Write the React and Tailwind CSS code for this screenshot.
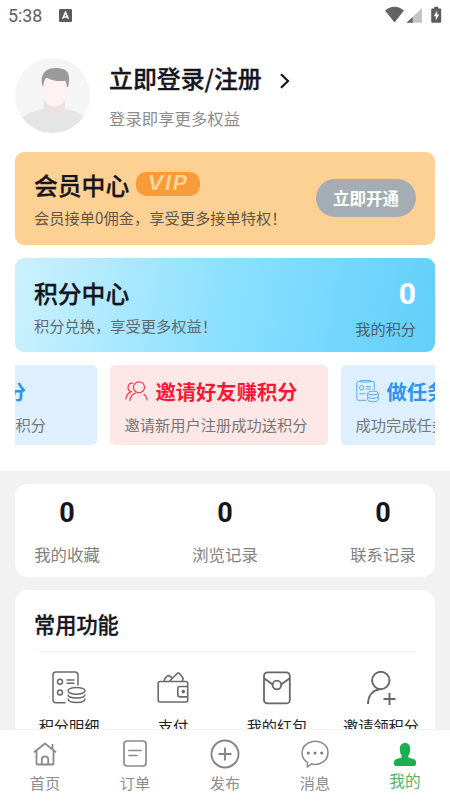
import React from 'react';

const stats = [
  { label: '我的收藏', value: 0 },
  { label: '浏览记录', value: 0 },
  { label: '联系记录', value: 0 },
];

const StatusBar = () => (
  <div className="flex h-[31px] items-center pl-2 pr-[8px] text-[#5f5f5f]">
    <span className="mt-px font-['Roboto',sans-serif] text-[17.800px] leading-none">5:38</span>
    <svg className="ml-[17px]" width="13" height="13" viewBox="0 0 13 13">
      <rect width="13" height="13" rx="1.2" fill="#5c5c5c" />
      <path d="M3.6 9.8 6.5 3.4l2.9 6.4M4.7 7.9h3.6" fill="none" stroke="#fff" strokeWidth="1.5" />
    </svg>
    <svg className="-mt-[2px] ml-auto" width="57" height="18" viewBox="0 0 57 18">
      <path d="M0 4.6C5-.5 14-.5 19 4.6L9.5 16.4z" fill="#636363" />
      <path d="M37 2v14.800H21.500z" fill="#c4c4c4" />
      <path d="M27.700 11v5.800H21.500z" fill="#636363" />
      <path d="M49.200.7h4v1.700h2q1 0 1 1v12.400q0 1-1 1h-8q-1 0-1-1V3.400q0-1 1-1h2z" fill="#5c5c5c" />
      <path d="m52.200 4.300-3.400 6h2v4.200l3.400-6.100h-2z" fill="#fff" />
    </svg>
  </div>
);

const Avatar = () => (
  <svg className="shrink-0" width="75" height="75" viewBox="0 0 75 75">
    <defs>
      <clipPath id="avatar">
        <circle cx="37.500" cy="37.500" r="37.500" />
      </clipPath>
    </defs>
    <g clipPath="url(#avatar)">
      <rect width="75" height="75" fill="#f5f5f5" />
      <path d="M5 61c6-5 13-8 23-10h22c9 1 17 5 22 10v15H5z" fill="#e5e5e5" />
      <path d="M29 41h21v9.500c-2 11.500-21 11.500-22 0z" fill="#e9e4e3" />
      <path d="M27.500 18h25v12c1.500 1 .5 5-1 6-.8 7-5 12.500-11.800 12.500S28.500 43 27.800 36c-2-1-2-6-.3-6z" fill="#fef3f2" />
      <path d="M28.200 29c-3-6-1.500-13 3-16.500 5-3.500 14-3 18.500-.8 5 3 5.300 9 3.500 17.300h-1.200l-1.500-6.300c-6.500.8-13 .3-18.800-3-2.500 1.300-2.700 5-3.500 9.300z" fill="#9a9a9a" />
    </g>
  </svg>
);

const TaskIcon = () => (
  <svg width="23" height="23" viewBox="0 0 23 23" fill="none" stroke="#58a9ee" strokeWidth="1">
    <path d="M4.500 1.500h-2Q.8 1.500.8 3v15.500q0 1.800 1.700 1.800H10M14.500 1.500h2.300q1.500 0 1.500 1.500v7" />
    <path d="M4.500.6h10v1.400h-10zM10 6.500h5M10 9h5M3.500 13.800h6" />
    <circle cx="5.700" cy="7.800" r="2.200" />
    <ellipse cx="17" cy="13" rx="5.300" ry="1.900" />
    <path d="M11.700 13v6.800c0 2.600 10.600 2.600 10.600 0V13M11.700 16.400c0 2.600 10.600 2.600 10.600 0" />
  </svg>
);

const FriendsIcon = () => (
  <svg width="23" height="21" viewBox="0 0 23 21" fill="none" stroke="#f4364c" strokeWidth="1.200" strokeLinecap="round">
    <circle cx="14" cy="6.300" r="5.500" />
    <path d="M7.500 2.200C2 2 1.800 9.500 6 10.600 2.500 12.500 1 15 .8 18M4.800 19.500c.4-4 2.500-6.500 6-7.500M19 13.300c1.800 1.400 2.900 3.400 3.200 5.700" />
  </svg>
);

const PromoCard = ({ icon, title, desc, className, titleColor }) => (
  <div className={`h-[80.500px] w-[218px] shrink-0 whitespace-nowrap rounded-[5px] pl-[15px] pt-[13px] ${className}`}>
    <div className="flex h-[28px] items-center">
      <div className="flex w-[31px] items-center">{icon}</div>
      <span className={`text-[20.300px] font-bold leading-none ${titleColor}`}>{title}</span>
    </div>
    <p className="mt-[6.500px] text-[15.250px] leading-[24px] text-[#767676]">{desc}</p>
  </div>
);

const functions = [
  {
    label: '积分明细',
    icon: (
      <svg width="36" height="34" viewBox="0 0 36 34" fill="none" stroke="#6a6a6a" strokeWidth="1.500">
        <path d="M14.500 31.800H5q-3 0-3-3V4q0-3 3-3h19q3 0 3 3v10.500" />
        <circle cx="9" cy="10.700" r="2.500" />
        <circle cx="9" cy="21.600" r="2.500" />
        <path d="M15.500 9h8M15.500 12.200h8" />
        <ellipse cx="25.500" cy="19.800" rx="8.500" ry="3.400" />
        <path d="M17 23.500c0 4.700 17 4.700 17 0M17 27.600c0 5.300 17 5.300 17 0" />
      </svg>
    ),
  },
  {
    label: '支付',
    icon: (
      <svg width="32" height="34" viewBox="0 0 32 34" fill="none" stroke="#6a6a6a" strokeWidth="1.600" strokeLinejoin="round">
        <rect x="1.200" y="10.500" width="29.500" height="20.500" rx="2" />
        <path d="M7 10.300q1-4.500 4.500-5.800l3.500 2M12.500 10.300l8-8q.8-.8 1.600 0l3.600 4.200q1 1-.6 3.800" />
        <path d="M30.700 15.500H23q-2.200 0-2.200 2.200v6q0 2.200 2.200 2.200h7.700" />
        <circle cx="26.300" cy="20.600" r="1" fill="#6a6a6a" />
      </svg>
    ),
  },
  {
    label: '我的红包',
    icon: (
      <svg width="28" height="34" viewBox="0 0 28 34" fill="none" stroke="#666" strokeWidth="1.800">
        <rect x="1" y="1.400" width="25.800" height="31" rx="3.500" />
        <path d="m1.300 7.500 8 5.800M26.500 7.500l-8 5.800" />
        <circle cx="13.900" cy="14" r="4.300" />
      </svg>
    ),
  },
  {
    label: '邀请领积分',
    icon: (
      <svg width="30" height="34" viewBox="0 0 30 34" fill="none" stroke="#666" strokeWidth="1.900">
        <circle cx="14.800" cy="9.500" r="8.700" />
        <path d="M13.500 18.200C6.500 19.500 2 25 2 33M17.500 28h12M23.500 22v12" />
      </svg>
    ),
  },
];

const tabs = [
  {
    label: '首页',
    icon: (
      <svg width="24" height="24" viewBox="0 0 24 24" fill="none" stroke="#8a8a8a" strokeWidth="1.800" strokeLinejoin="round">
        <path d="M1 10.200 12 1.500l11 8.700M3.500 9v12.500q0 1 1 1h15q1 0 1-1V9M19.500 2v5" />
        <path d="M8.800 22v-4.500a3.200 3.200 0 0 1 6.400 0V22" />
      </svg>
    ),
  },
  {
    label: '订单',
    icon: (
      <svg width="24" height="27" viewBox="0 0 24 27" fill="none" stroke="#8a8a8a" strokeWidth="1.700" strokeLinecap="round">
        <rect x="1" y="1" width="22" height="25" rx="3.200" />
        <path d="M6 10.500h12M6 15.500h8" />
      </svg>
    ),
  },
  {
    label: '发布',
    icon: (
      <svg width="30" height="30" viewBox="0 0 30 30" fill="none" stroke="#858585" strokeWidth="1.900">
        <circle cx="15" cy="15" r="13.500" />
        <path d="M8.500 15h13M15 8.500v13" />
      </svg>
    ),
  },
  {
    label: '消息',
    icon: (
      <svg width="28" height="28" viewBox="0 0 28 28" fill="none" stroke="#8a8a8a" strokeWidth="1.500" strokeLinejoin="round">
        <path d="M6.500 22.500C-1.500 17-.5 6 8.500 2.500c10-3.500 18.500 2 18.500 10 0 9-9.500 13.500-16.500 11.300L6.300 27z" />
        <g fill="#7a7a7a" stroke="none">
          <circle cx="7.300" cy="13" r="1.500" />
          <circle cx="14" cy="13" r="1.500" />
          <circle cx="20.700" cy="13" r="1.500" />
        </g>
      </svg>
    ),
  },
  {
    label: '我的',
    active: true,
    icon: (
      <svg className="mt-[2px]" width="22" height="23" viewBox="0 0 22 23" fill="#18b04f">
        <path d="M11 0c3.600 0 5.300 2.600 5.200 6-.1 3-.6 5.100-1.800 6.400v2.200l5.600 1.600q2 .6 2 2.500V21q0 2-2 2H2q-2 0-2-2v-2.300q0-1.900 2-2.500l5.600-1.600v-2.200C6.400 11.100 5.900 9 5.800 6 5.700 2.600 7.400 0 11 0z" />
      </svg>
    ),
  },
];

const App = () => {
  return (
    <div className="flex h-[801px] w-[450px] flex-col overflow-hidden bg-[#f2f2f2] font-['Noto_Sans_CJK_SC',sans-serif] text-[#15151d]">
      <div className="h-[470.500px] shrink-0 bg-white">
        <StatusBar />

        {/* Login */}
        <div className="mt-[26.500px] flex px-[15px]">
          <Avatar />
          <div className="ml-[19px] pt-[5px]">
            <div className="flex h-[31px] items-center">
              <h1 className="text-[23.900px] font-medium leading-none [-webkit-text-stroke:0.300px_#15151d]">立即登录/注册</h1>
              <svg className="ml-[18px] mt-[5px]" width="10" height="16" viewBox="0 0 10 16" fill="none" stroke="#15151d" strokeWidth="2.200">
                <path d="m1 1.200 7 6.800-7 6.800" />
              </svg>
            </div>
            <p className="mt-[12px] text-[16.400px] leading-[24px] text-[#8c8c8c]">登录即享更多权益</p>
          </div>
        </div>

        {/* VIP */}
        <div className="mx-[15px] mt-[19px] flex h-[93.500px] items-center justify-between rounded-[9px] bg-[#fdd193] pl-[19px] pr-[19px]">
          <div>
            <div className="flex h-[32px] items-center pt-[3px]">
              <h2 className="text-[23.800px] font-medium leading-none [-webkit-text-stroke:0.300px_#15151d]">会员中心</h2>
              <span className="-mt-[2px] ml-[7px] flex h-[24px] w-[64px] items-center justify-center rounded-[10px] bg-[#f79c38]">
                <span className="inline-block scale-x-[1.150] font-['Inter',sans-serif] text-[19.500px] font-semibold italic leading-none tracking-[1.200px] text-[#fdd598]">VIP</span>
              </span>
            </div>
            <p className="mt-[6px] whitespace-nowrap text-[15.250px] leading-[24px] text-[#5f564b]">会员接单0佣金，享受更多接单特权！</p>
          </div>
          <button className="h-[38px] w-[100px] shrink-0 rounded-full bg-[#a4adb3] text-[16.500px] font-bold leading-none text-white">立即开通</button>
        </div>

        {/* Points */}
        <div className="mx-[15px] mt-[13px] flex h-[93.500px] justify-between rounded-[9px] bg-[linear-gradient(100deg,#cdf1fe_0%,#8be0ff_50%,#62cffa_100%)] px-[19px]">
          <div className="pt-[19px]">
            <h2 className="text-[23.800px] font-medium leading-[32px] [-webkit-text-stroke:0.300px_#15151d]">积分中心</h2>
            <p className="mt-[4px] text-[15.250px] leading-[24px] text-[#5c6a70]">积分兑换，享受更多权益！</p>
          </div>
          <div className="pt-[19px] text-right">
            <div className="font-['Roboto',sans-serif] text-[30px] font-bold leading-[34px] text-white">0</div>
            <p className="mt-[4.500px] text-[15.200px] leading-[24px] text-[#505c62]">我的积分</p>
          </div>
        </div>

        {/* Promo carousel */}
        <div className="mx-[15px] mt-[13px] flex gap-[13px] overflow-hidden">
          <PromoCard className="ml-[-136.500px] bg-[#def0ff]" titleColor="text-[#2a94ee]" icon={<TaskIcon />} title="签到领积分" desc="每日签到成功领取积分" />
          <PromoCard className="bg-[#fee7e7]" titleColor="text-[#fb1734]" icon={<FriendsIcon />} title="邀请好友赚积分" desc="邀请新用户注册成功送积分" />
          <PromoCard className="bg-[#def0ff]" titleColor="text-[#2a94ee]" icon={<TaskIcon />} title="做任务赚积分" desc="成功完成任务送积分" />
        </div>
      </div>

      {/* Stats */}
      <div className="mx-[15px] mt-[13px] flex h-[93.500px] shrink-0 justify-between rounded-[13px] bg-white px-[19px] pt-[13px]">
        {stats.map((item) => (
          <div key={item.label} className="w-[66px] text-center">
            <div className="font-['Roboto',sans-serif] text-[27px] font-bold leading-[32px]">{item.value}</div>
            <div className="mt-[13.500px] whitespace-nowrap text-[16.400px] leading-[24px] text-[#808080]">{item.label}</div>
          </div>
        ))}
      </div>

      {/* Common functions */}
      <div className="mx-[15px] mt-[12.500px] min-h-0 flex-1 overflow-hidden rounded-t-[13px] bg-white pt-[18px]">
        <h2 className="ml-[19px] text-[21.200px] font-medium leading-[32px] [-webkit-text-stroke:0.300px_#15151d]">常用功能</h2>
        <div className="mx-[18px] mt-[11px] border-t border-[#f5f5f5]" />
        <div className="mx-[2px] grid grid-cols-4 pt-[19px]">
          {functions.map((item) => (
            <div key={item.label} className="flex flex-col items-center">
              {item.icon}
              <span className="mt-[8.500px] whitespace-nowrap text-[15.200px] leading-[24px] text-[#222]">{item.label}</span>
            </div>
          ))}
        </div>
      </div>

      {/* Tab bar */}
      <nav className="grid h-[72px] shrink-0 grid-cols-5 border-t border-[#f1f1f1] bg-white">
        {tabs.map((tab) => (
          <div key={tab.label} className="flex flex-col items-center pt-[8px]">
            <div className="flex h-[31px] items-center">{tab.icon}</div>
            <span
              className={
                tab.active
                  ? 'text-[15.700px] leading-[24px] text-[#4fb863]'
                  : 'mt-[0.500px] text-[15.200px] leading-[24px] text-[#8c8c8c]'
              }
            >
              {tab.label}
            </span>
          </div>
        ))}
      </nav>
    </div>
  );
};

export default App;
